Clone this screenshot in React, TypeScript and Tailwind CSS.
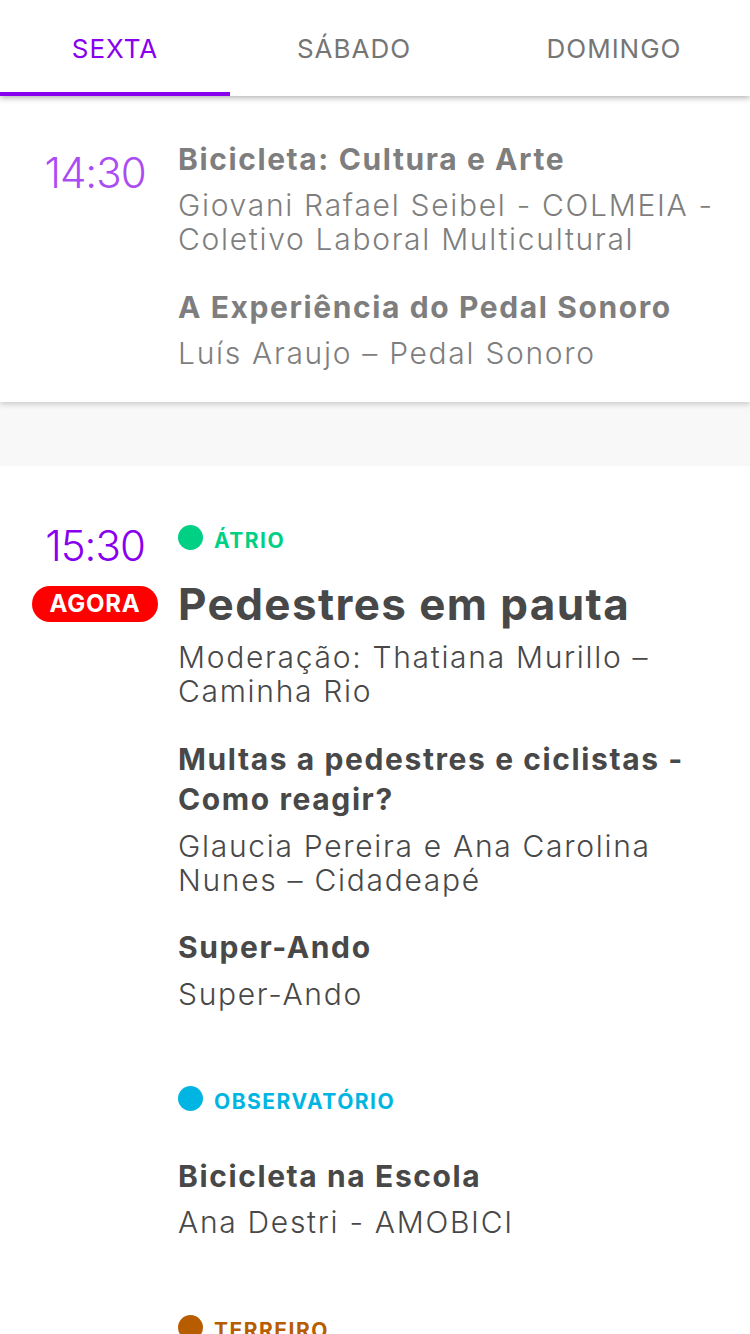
function Room({ color, label }: { color: string; label: string }) {
  const bg = color === "g" ? "bg-[#00d084]" : color === "b" ? "bg-[#00b5e2]" : "bg-[#b85c00]";
  const fg = color === "g" ? "text-[#00d084]" : color === "b" ? "text-[#00b5e2]" : "text-[#b85c00]";
  return (
    <div className="flex items-center h-[40px] gap-[11px]">
      <span className={`w-[25px] h-[25px] rounded-full -mt-[8px] ${bg}`} />
      <span className={`text-[21px] font-bold leading-[40px] tracking-[1.5px] ${fg}`}>{label}</span>
    </div>
  );
}

const TITLE = "text-[30px] leading-[40px] font-bold tracking-[1.6px]";
const SUB = "text-[30px] leading-[34px] font-light tracking-[1.7px]";

export default function App() {
  return (
    <div className="relative w-[750px] h-[1334px] overflow-hidden bg-[#f8f8f8] font-['Inter',sans-serif]">
      <header className="relative z-10 h-[96px] bg-white flex shadow-[0_2px_6px_rgba(0,0,0,0.3)]">
        <div className="relative w-[230px] flex items-center justify-center text-[26px] tracking-[1px] text-[#8800ee]">
          SEXTA
          <span className="absolute left-0 right-0 bottom-0 h-[4px] bg-[#8800ee]" />
        </div>
        <div className="w-[248px] flex items-center justify-center text-[26px] tracking-[1px] text-[#757575]">SÁBADO</div>
        <div className="flex-1 flex items-center justify-center text-[26px] tracking-[1px] text-[#757575]">DOMINGO</div>
      </header>

      <section className="bg-white flex pt-[43px] pb-[32px] shadow-[0_2px_6px_rgba(0,0,0,0.2)]">
        <div className="w-[178px] shrink-0 pl-[30px] pr-[18px] flex flex-col items-center opacity-70">
          <div className="mt-[9px] text-[42px] leading-[50px] font-light tracking-[-1px] text-[#8800ee]">14:30</div>
        </div>
        <div className="flex-1 pr-[24px] text-[#484848] opacity-70">
          <div className={TITLE}>Bicicleta: Cultura e Arte</div>
          <div className={`mt-[9px] ${SUB}`}>Giovani Rafael Seibel - COLMEIA - Coletivo Laboral Multicultural</div>
          <div className={`mt-[31px] ${TITLE}`}>A Experiência do Pedal Sonoro</div>
          <div className={`mt-[9px] ${SUB}`}>Luís Araujo – Pedal Sonoro</div>
        </div>
      </section>

      <div className="h-[64px]" />

      <section className="bg-white flex pt-[55px] pb-[40px]">
        <div className="w-[178px] shrink-0 pl-[30px] pr-[18px] flex flex-col items-center">
          <div className="text-[42px] leading-[50px] font-light tracking-[-1px] text-[#8800ee]">15:30</div>
          <div className="mt-[15px] h-[36px] px-[17px] rounded-full bg-[#ff0000] text-white text-[24px] font-bold leading-[36px] tracking-[0.8px]">
            AGORA
          </div>
        </div>
        <div className="flex-1 pr-[24px] text-[#484848]">
          <Room color="g" label="ÁTRIO" />
          <div className="mt-[15px] text-[44px] leading-[56px] font-bold tracking-[1.4px]">Pedestres em pauta</div>
          <div className={`mt-[8px] ${SUB}`}>Moderação: Thatiana Murillo – Caminha Rio</div>
          <div className={`mt-[31px] ${TITLE}`}>Multas a pedestres e ciclistas - Como reagir?</div>
          <div className={`mt-[10px] ${SUB}`}>Glaucia Pereira e Ana Carolina Nunes – Cidadeapé</div>
          <div className={`mt-[30px] ${TITLE}`}>Super-Ando</div>
          <div className={`mt-[10px] ${SUB}`}>Super-Ando</div>
          <div className="mt-[71px]">
            <Room color="b" label="OBSERVATÓRIO" />
          </div>
          <div className={`mt-[34px] ${TITLE}`}>Bicicleta na Escola</div>
          <div className={`mt-[9px] ${SUB}`}>Ana Destri - AMOBICI</div>
          <div className="mt-[72px]">
            <Room color="o" label="TERREIRO" />
          </div>
        </div>
      </section>
    </div>
  );
}
